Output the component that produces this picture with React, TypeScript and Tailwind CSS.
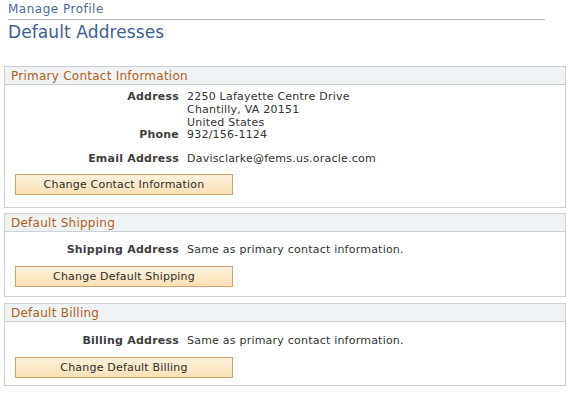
import React from 'react';

const font = { fontFamily: '"DejaVu Sans", Verdana, sans-serif' };

const Section: React.FC<{ title: string; children: React.ReactNode; className?: string }> = ({
  title,
  children,
  className = '',
}) => (
  <div className={`border border-[#cdd1d6] bg-white ${className}`}>
    <div className="h-[18px] border-b border-[#cdd1d6] bg-[#f0f3f5] pl-[6px] text-[12px] leading-[18px] tracking-[0.25px] text-[#b2611a]">
      {title}
    </div>
    {children}
  </div>
);

const Row: React.FC<{ label: string; children: React.ReactNode; className?: string }> = ({
  label,
  children,
  className = '',
}) => (
  <div className={`flex items-start ${className}`}>
    <div className="w-[174px] shrink-0 text-right font-bold text-[#3e3e3e]">{label}</div>
    <div className="pl-[8px] text-[#333]">{children}</div>
  </div>
);

const Button: React.FC<{ label: string }> = ({ label }) => (
  <button className="ml-[10px] h-[21px] w-[218px] border border-[#d6a26c] bg-gradient-to-b from-[#fdf2dd] to-[#fae0b4] text-[11px] tracking-[0.2px] text-[#2f2f2f]">
    {label}
  </button>
);

export default function App() {
  return (
    <div className="h-[394px] w-[570px] bg-white text-[11px] leading-[13px] tracking-[0.22px]" style={font}>
      <div className="px-[8px] pt-[2px]">
        <div className="mr-[17px] border-b border-[#b8b8b8] pb-[2px] text-[12px] leading-[15px] tracking-[0.5px] text-[#4a6a97]">
          Manage Profile
        </div>
        <div className="pt-[2px] text-[17px] leading-[20px] tracking-[0.1px] text-[#3d5e90]">Default Addresses</div>
      </div>

      <div className="px-[4px] pt-[24px]">
        <Section title="Primary Contact Information">
          <div className="pt-[5px] pb-[12px]">
            <Row label="Address">
              <div>2250 Lafayette Centre Drive</div>
              <div>Chantilly, VA 20151</div>
              <div>United States</div>
            </Row>
            <Row label="Phone" className="-mt-[1px]">
              932/156-1124
            </Row>
            <Row label="Email Address" className="mt-[11px]">
              Davisclarke@fems.us.oracle.com
            </Row>
            <div className="mt-[9px]">
              <Button label="Change Contact Information" />
            </div>
          </div>
        </Section>

        <Section title="Default Shipping" className="mt-[5px]">
          <div className="pt-[11px] pb-[9px]">
            <Row label="Shipping Address">Same as primary contact information.</Row>
            <div className="mt-[10px]">
              <Button label="Change Default Shipping" />
            </div>
          </div>
        </Section>

        <Section title="Default Billing" className="mt-[6px]">
          <div className="pt-[12px] pb-[7px]">
            <Row label="Billing Address">Same as primary contact information.</Row>
            <div className="mt-[10px]">
              <Button label="Change Default Billing" />
            </div>
          </div>
        </Section>
      </div>
    </div>
  );
}
